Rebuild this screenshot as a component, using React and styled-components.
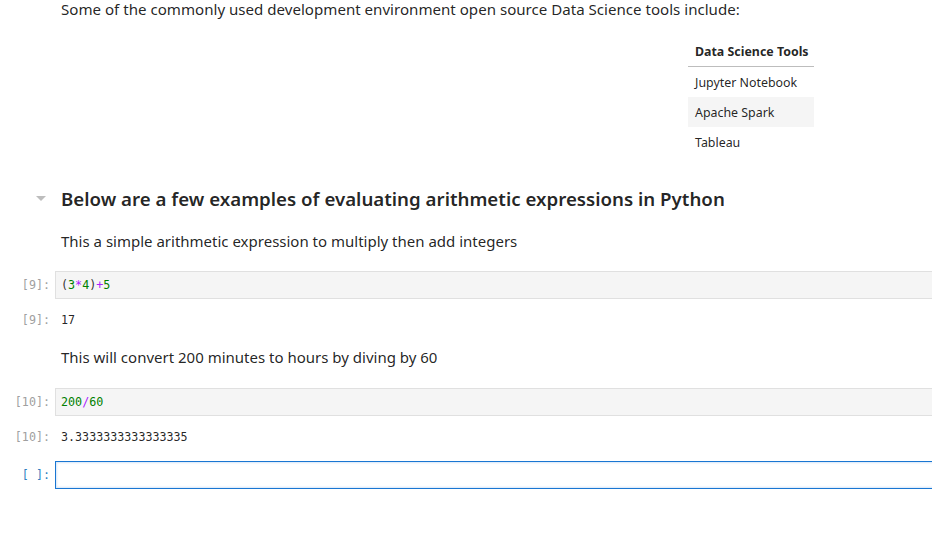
import React from "react";
import styled, { createGlobalStyle } from "styled-components";

const Global = createGlobalStyle`
  html, body { margin: 0; padding: 0; background: #fff; overflow: hidden; }
  body { font-family: "Noto Sans", "Open Sans", sans-serif; color: rgba(0,0,0,0.87); }
`;

const Notebook = styled.div`
  display: flex;
  flex-direction: column;
  width: 1100px;
`;

const CellRow = styled.div`
  display: flex;
  align-items: center;
  margin-top: ${(p) => p.$mt || 0}px;
  position: relative;
`;

const Prompt = styled.div`
  width: 50px;
  flex: 0 0 50px;
  margin-right: 5px;
  text-align: right;
  font-family: "DejaVu Sans Mono", "Liberation Mono", monospace;
  font-size: 11.7px;
  line-height: 18px;
  color: ${(p) => (p.$active ? "#307fc1" : "#a0a0a0")};
`;

const Markdown = styled.div`
  flex: 1;
  padding-left: 6px;
  display: flex;
  flex-direction: column;
`;

const Para = styled.p`
  margin: 0;
  font-size: ${(p) => p.$fs || 15}px;
  line-height: ${(p) => p.$lh || 20}px;
  color: rgba(0,0,0,0.87);
`;

const Heading = styled.h3`
  margin: 0;
  font-size: 18.7px;
  font-weight: 600;
  line-height: 26px;
  color: rgba(0,0,0,0.87);
`;

const Collapser = styled.span`
  position: absolute;
  left: 36px;
  top: 10px;
  width: 10px;
  height: 6px;
  display: flex;
`;

const Table = styled.table`
  border-collapse: collapse;
  table-layout: fixed;
  margin-top: 18px;
  margin-left: 627px;
  width: 126px;
  font-size: 12.4px;
  color: rgba(0,0,0,0.87);
`;

const Th = styled.th`
  text-align: left;
  font-weight: 700;
  height: 30px;
  padding: 0 7px;
  border-bottom: 1px solid #bdbdbd;
  white-space: nowrap;
`;

const Tr = styled.tr`
  background: ${(p) => (p.$striped ? "#f5f5f5" : "transparent")};
`;

const Td = styled.td`
  height: 30px;
  padding: 0 7px;
  white-space: nowrap;
`;

const CodeBox = styled.div`
  flex: 1;
  height: 28px;
  box-sizing: border-box;
  border: 1px solid ${(p) => (p.$active ? "#1976d2" : "#e0e0e0")};
  background: ${(p) => (p.$active ? "#fff" : "#f5f5f5")};
  box-shadow: ${(p) => (p.$active ? "inset 0 0 2px 1px rgba(25,118,210,0.18)" : "none")};
  padding: 0 5px;
  display: flex;
  align-items: center;
  font-family: "DejaVu Sans Mono", "Liberation Mono", monospace;
  font-size: 11.7px;
  color: #212121;
`;

const Output = styled.div`
  flex: 1;
  padding-left: 6px;
  font-family: "DejaVu Sans Mono", "Liberation Mono", monospace;
  font-size: 11.7px;
  line-height: 18px;
  color: rgba(0,0,0,0.87);
`;

const Num = styled.span`color: #008000;`;
const Op = styled.span`color: #aa22ff;`;
const Br = styled.span`color: #333;`;

export default function App() {
  return (
    <>
      <Global />
      <Notebook>
        <CellRow $mt={0}>
          <Prompt />
          <Markdown>
            <Para $lh={18} $fs={15.1}>
              Some of the commonly used development environment open source Data Science tools include:
            </Para>
            <Table>
              <thead>
                <tr><Th>Data Science Tools</Th></tr>
              </thead>
              <tbody>
                <Tr><Td>Jupyter Notebook</Td></Tr>
                <Tr $striped><Td>Apache Spark</Td></Tr>
                <Tr><Td>Tableau</Td></Tr>
              </tbody>
            </Table>
          </Markdown>
        </CellRow>

        <CellRow $mt={29}>
          <Collapser>
            <svg width="10" height="6" viewBox="0 0 10 6">
              <path d="M0 0 L10 0 L5 5 Z" fill="#bdbdbd" />
            </svg>
          </Collapser>
          <Prompt />
          <Markdown>
            <Heading>Below are a few examples of evaluating arithmetic expressions in Python</Heading>
          </Markdown>
        </CellRow>

        <CellRow $mt={19}>
          <Prompt />
          <Markdown>
            <Para>This a simple arithmetic expression to multiply then add integers</Para>
          </Markdown>
        </CellRow>

        <CellRow $mt={20}>
          <Prompt>[9]:</Prompt>
          <CodeBox>
            <Br>(</Br><Num>3</Num><Op>*</Op><Num>4</Num><Br>)</Br><Op>+</Op><Num>5</Num>
          </CodeBox>
        </CellRow>

        <CellRow $mt={12}>
          <Prompt>[9]:</Prompt>
          <Output>17</Output>
        </CellRow>

        <CellRow $mt={18}>
          <Prompt />
          <Markdown>
            <Para>This will convert 200 minutes to hours by diving by 60</Para>
          </Markdown>
        </CellRow>

        <CellRow $mt={21}>
          <Prompt>[10]:</Prompt>
          <CodeBox>
            <Num>200</Num><Op>/</Op><Num>60</Num>
          </CodeBox>
        </CellRow>

        <CellRow $mt={12}>
          <Prompt>[10]:</Prompt>
          <Output>3.3333333333333335</Output>
        </CellRow>

        <CellRow $mt={15}>
          <Prompt $active>[ ]:</Prompt>
          <CodeBox $active />
        </CellRow>
      </Notebook>
    </>
  );
}
